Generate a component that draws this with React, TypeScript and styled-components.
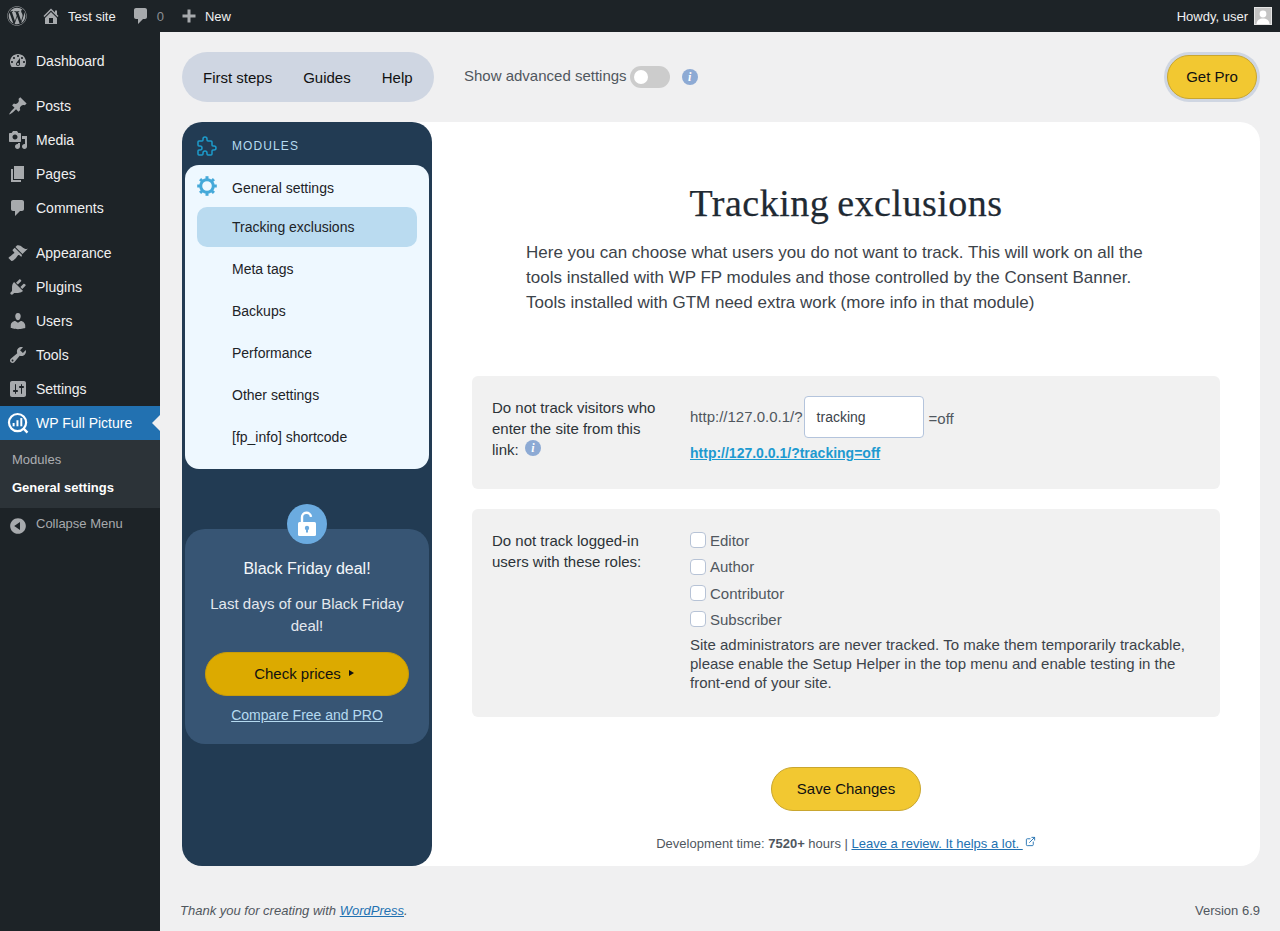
import React from "react";
import styled, { createGlobalStyle } from "styled-components";
import { FaWordpress } from "react-icons/fa";
import { TbPuzzle } from "react-icons/tb";
import { ExternalLink } from "lucide-react";

const Global = createGlobalStyle`
  html, body { margin: 0; padding: 0; background: #f0f0f1; }
  body { font-family: "Liberation Sans", Arial, sans-serif; font-size: 13px; color: #3c434a; }
  * { box-sizing: border-box; }
`;

const Page = styled.div`height: 931px; display: flex; flex-direction: column; overflow: hidden;`;
const AdminBar = styled.header`
  height: 32px; flex: none; background: #1d2327; color: #f0f0f1; display: flex; align-items: center;
  font-size: 13px;
`;
const BarLogo = styled.span`width: 34px; margin-left: 7px; display: flex; color: #a7aaad;`;
const BarItem = styled.span<{ $gap: number; $ml: number }>`
  display: flex; align-items: center; gap: ${p => p.$gap}px; margin-left: ${p => p.$ml}px;
  svg { fill: #a7aaad; flex: none; }
`;
const BarCount = styled.span`color: #8c8f94; margin-left: 2px;`;
const BarRight = styled.div`margin-left: auto; display: flex; align-items: center; gap: 6px; padding-right: 8px;`;
const Avatar = styled.span`width: 18px; height: 18px; background: #c4c4c4; border: 1px solid #e5e5e5; display: flex; overflow: hidden;`;

const Body = styled.div`flex: 1; display: flex; min-height: 0;`;
const SideMenu = styled.nav`width: 160px; flex: none; background: #1d2327; padding-top: 12px; font-size: 14px;`;
const MenuItem = styled.div<{ $active?: boolean; $sep?: boolean }>`
  height: 34px; display: flex; align-items: center; position: relative; margin-top: ${p => p.$sep ? 11 : 0}px;
  color: ${p => p.$active ? "#fff" : "#f0f0f1"}; background: ${p => p.$active ? "#2271b1" : "transparent"};
  svg.menu { width: 20px; height: 20px; fill: #a7aaad; margin-left: 8px; margin-right: 8px; flex: none; }
  svg.brand { width: 22px; height: 22px; margin-left: 7px; margin-right: 7px; flex: none; }
`;
const ActiveArrow = styled.span`
  position: absolute; right: 0; top: 9px; border: 8px solid transparent; border-right-color: #f0f0f1; border-left: 0;
`;
const SubMenu = styled.div`background: #2c3338; height: 68px; padding: 5px 0 0 12px; font-size: 13px;`;
const SubItem = styled.div<{ $current?: boolean }>`
  height: 28px; display: flex; align-items: center; color: ${p => p.$current ? "#fff" : "#c3c4c7"}; font-weight: ${p => p.$current ? 700 : 400};
  opacity: ${p => p.$current ? 1 : 0.85};
`;
const Collapse = styled.div`
  height: 34px; display: flex; align-items: center; color: #a7aaad; font-size: 13px;
  svg { width: 20px; height: 20px; fill: #a7aaad; margin-left: 8px; margin-right: 8px; margin-top: 1px; }
  span { margin-top: -3px; }
`;

const Content = styled.main`flex: 1; padding: 20px 20px 0 20px; display: flex; flex-direction: column; min-width: 0;`;
const Toolbar = styled.div`height: 50px; margin-left: 2px; display: flex; align-items: center;`;
const NavPill = styled.div`
  width: 252px; height: 50px; border-radius: 25px; background: #cfd6e2; display: flex; align-items: center; padding-left: 21px; gap: 31px;
  font-size: 15px; color: #111;
`;
const AdvLabel = styled.span`margin-left: 30px; font-size: 15px; color: #50575e; margin-top: -3px;`;
const Toggle = styled.span`
  width: 40px; height: 22px; border-radius: 11px; background: #ccc; margin-left: 3px; padding: 4px; display: flex;
  &::before { content: ""; width: 14px; height: 14px; border-radius: 50%; background: #fff; }
`;
const Info = styled.span<{ $ml: number; $lift: number }>`
  display: inline-flex; align-items: center; justify-content: center; width: 16px; height: 16px; border-radius: 50%; background: #8daad4; color: #fff;
  font: italic 700 12px/16px "Liberation Serif", serif; margin-left: ${p => p.$ml}px; vertical-align: ${p => p.$lift}px;
`;
const ProRing = styled.span`margin-left: auto; padding: 3px; border-radius: 25px; background: #cfd6e2; display: flex;`;
const YellowBtn = styled.span<{ $w: number }>`
  width: ${p => p.$w}px; height: 44px; border-radius: 22px; background: #f2c831; border: 1px solid #c9a62f; color: #111; font-size: 15px;
  display: flex; align-items: center; justify-content: center; padding-bottom: 1px;
`;

const Card = styled.section`
  margin: 20px 0 0 2px; height: 744px; flex: none; background: #fff; border-radius: 20px; display: flex;
`;
const Panel = styled.aside`width: 250px; flex: none; background: #223b53; border-radius: 20px; padding: 0 3px; display: flex; flex-direction: column;`;
const PanelHead = styled.div`
  height: 43px; display: flex; align-items: center; padding: 5px 0 0 12px; color: #b5daf0; font-size: 12px; letter-spacing: 1.1px;
  svg { width: 24px; height: 24px; color: #1d9ccc; margin: 0 13px 0 -2px; flex: none; }
`;
const Modules = styled.div`background: #eef8ff; border-radius: 14px; height: 304px; padding: 11px 12px 12px; font-size: 14px; color: #1d2327;`;
const ModHead = styled.div`height: 31px; display: flex; align-items: flex-start; svg { width: 20px; height: 20px; margin-right: 15px; flex: none; } span { margin-top: 4px; }`;
const ModList = styled.div`display: flex; flex-direction: column; gap: 2px;`;
const ModItem = styled.div<{ $on?: boolean }>`
  height: 40px; border-radius: 10px; padding-left: 35px; display: flex; align-items: center; background: ${p => p.$on ? "#badbf0" : "transparent"};
`;
const Promo = styled.div`
  margin-top: 60px; height: 215px; background: #375574; border-radius: 20px; position: relative; padding: 30px 20px 0; text-align: center; color: #eef2f7;
`;
const PromoIcon = styled.span`
  position: absolute; left: 102px; top: -25px; width: 40px; height: 40px; border-radius: 50%; background: #6babe0; display: flex; align-items: center; justify-content: center;
`;
const PromoTitle = styled.div`font-size: 16px; line-height: 20px; color: #f4f7fa;`;
const PromoText = styled.div`font-size: 15px; line-height: 22px; margin-top: 14px; color: #e3e8ee;`;
const PromoBtn = styled.div`
  height: 44px; margin-top: 15px; border-radius: 22px; background: #dcaa00; border: 1px solid #c99c08; color: #111; font-size: 15px;
  display: flex; align-items: center; justify-content: center; gap: 8px; padding: 0 6px 2px 0;
  &::after { content: ""; border: 3.5px solid transparent; border-left: 5px solid #111; border-right: 0; margin-top: -1px; }
`;
const PromoLink = styled.a`display: block; margin-top: 10px; font-size: 14px; line-height: 18px; color: #b5daf0; text-decoration: underline;`;

const Main = styled.div`flex: 1; padding: 0 40px; display: flex; flex-direction: column; min-width: 0;`;
const Title = styled.h1`
  margin: 59px 0 0; font: 400 38px/44px "Liberation Serif", serif; text-align: center; color: #1f2a33; letter-spacing: 0.5px; word-spacing: -2px;
  -webkit-text-stroke: 0.25px #1f2a33;
`;
const Lead = styled.p`margin: 15px 0 0 54px; width: 640px; font-size: 17px; line-height: 25px; color: #3c434a;`;
const Box = styled.div<{ $h: number; $mt: number }>`
  height: ${p => p.$h}px; margin-top: ${p => p.$mt}px; background: #f1f1f1; border-radius: 6px; padding: 20px; display: flex;
`;
const Label = styled.div`width: 198px; flex: none; font-size: 15px; line-height: 21px; color: #2c3338; padding: 1px 30px 0 0;`;
const Field = styled.div<{ $lift?: boolean }>`flex: 1; min-width: 0; font-size: 15px; color: #50575e; margin-top: ${p => p.$lift ? -2 : 0}px;`;
const UrlLine = styled.div`display: flex; align-items: center; height: 42px; gap: 1px;`;
const UrlBase = styled.span`margin-top: -2px;`;
const TextBox = styled.div`
  width: 120px; height: 42px; background: #fff; border: 1px solid #b4c4dc; border-radius: 4px; padding-left: 12px; display: flex; align-items: center; font-size: 14px; color: #3c434a;
`;
const OffText = styled.span`margin-left: 4px; margin-top: 2px;`;
const UrlLink = styled.a`display: block; margin-top: 6px; font-size: 14px; line-height: 18px; font-weight: 700; color: #1d9ad0; text-decoration: underline;`;
const CheckRow = styled.label<{ $h: number }>`display: flex; align-items: center; height: ${p => p.$h}px; gap: 4px; color: #50575e;`;
const CheckBox = styled.span`width: 16px; height: 16px; background: #fff; border: 1px solid #b7c3d6; border-radius: 4px; flex: none;`;
const Note = styled.p`margin: 3px 0 0; font-size: 15px; line-height: 19px; color: #3c434a;`;
const SaveWrap = styled.div`display: flex; justify-content: center; margin-top: 50px;`;
const Dev = styled.div`
  margin-top: 25px; text-align: center; font-size: 13px; line-height: 16px; color: #50575e;
  a { color: #2271b1; text-decoration: underline; }
  svg { width: 11px; height: 11px; margin-left: 2px; vertical-align: 1px; }
`;
const Footer = styled.footer`
  margin-top: 37px; display: flex; justify-content: space-between; font-size: 13px; line-height: 16px; color: #50575e;
  em a { color: #2271b1; text-decoration: underline; }
`;

const Dash = ({ d }: { d: string }) => <svg className="menu" viewBox="0 0 20 20"><path d={d} /></svg>;
const P = {
  dash: "M3.76 16h12.48c1.1-1.37 1.76-3.11 1.76-5 0-4.42-3.58-8-8-8s-8 3.58-8 8c0 1.89.66 3.63 1.76 5zM10 4c.55 0 1 .45 1 1s-.45 1-1 1-1-.45-1-1 .45-1 1-1zM6 6c.55 0 1 .45 1 1s-.45 1-1 1-1-.45-1-1 .45-1 1-1zm8 0c.55 0 1 .45 1 1s-.45 1-1 1-1-.45-1-1 .45-1 1-1zm-5.37 5.55L12 7v6c0 1.1-.9 2-2 2s-2-.9-2-2c0-.57.24-1.08.63-1.45zM4 10c.55 0 1 .45 1 1s-.45 1-1 1-1-.45-1-1 .45-1 1-1zm12 0c.55 0 1 .45 1 1s-.45 1-1 1-1-.45-1-1 .45-1 1-1zm-5 3c0-.55-.45-1-1-1s-1 .45-1 1 .45 1 1 1 1-.45 1-1z",
  pin: "M10.44 3.02l1.82-1.82 6.36 6.35-1.83 1.82c-1.05-.68-2.48-.57-3.41.36l-.75.75c-.92.93-1.04 2.35-.35 3.41l-1.83 1.82-2.41-2.41-2.8 2.79c-.42.42-3.38 2.71-3.8 2.29s1.86-3.39 2.28-3.81l2.79-2.79L4.1 9.36l1.83-1.82c1.05.69 2.48.57 3.4-.36l.75-.75c.93-.92 1.05-2.35.36-3.41z",
  media: "M13 11V4c0-.55-.45-1-1-1h-1.67L9 1H5L3.67 3H2c-.55 0-1 .45-1 1v7c0 .55.45 1 1 1h10c.55 0 1-.45 1-1zM7 4.5c1.38 0 2.5 1.12 2.5 2.5S8.38 9.5 7 9.5 4.5 8.38 4.5 7 5.62 4.5 7 4.5zM14 6h5v10.5c0 1.38-1.12 2.5-2.5 2.5S14 17.88 14 16.5s1.12-2.5 2.5-2.5c.17 0 .34.02.5.05V9h-3V6zm-4 8.05V13h2v3.5c0 1.38-1.12 2.5-2.5 2.5S7 17.88 7 16.5 8.12 14 9.5 14c.17 0 .34.02.5.05z",
  page: "M6 15V2h10v13H6zm-1 1h8v2H3V5h2v11z",
  comment: "M5 2h9c1.1 0 2 .9 2 2v7c0 1.1-.9 2-2 2h-2l-5 5v-5H5c-1.1 0-2-.9-2-2V4c0-1.1.9-2 2-2z",
  appearance: "M14.48 11.06L7.41 3.99l1.5-1.5c.5-.56 2.3-.47 3.51.32 1.21.8 1.43 1.28 2.91 2.1 1.18.64 2.45 1.26 4.45.85zm-.71.71L6.7 4.7 4.93 6.47c-.39.39-.39 1.02 0 1.41l1.06 1.06c.39.39.39 1.03 0 1.42-.6.6-1.43 1.11-2.21 1.69-.35.26-.7.53-1.01.84C1.43 13.23.4 14.98.4 14.98s1.94 1.94 2.85 2.85c.9.91 2.9-.99 4.26-2.35.31-.31.58-.66.84-1.01.58-.78 1.09-1.61 1.69-2.21.39-.39 1.03-.39 1.42 0l1.06 1.06c.39.39 1.02.39 1.41 0z",
  plugin: "M13.11 4.36L9.87 7.6 8 5.73l3.24-3.24c.35-.34 1.05-.2 1.56.32.52.51.66 1.21.31 1.55zm-8 1.77l.91-1.12 9.01 9.01-1.19.84c-.71.71-2.63 1.16-3.82 1.16H6.14L4.9 17.26c-.59.59-1.54.59-2.12 0-.59-.58-.59-1.53 0-2.12l1.24-1.24v-3.88c0-1.13.4-3.19 1.09-3.89zm7.26 3.97l3.24-3.24c.34-.35 1.04-.21 1.55.31.52.51.66 1.21.31 1.55l-3.24 3.25z",
  users: "M10 9.25c-2.27 0-2.73-3.44-2.73-3.44C7 4.02 7.82 2 9.97 2c2.16 0 2.98 2.02 2.71 3.81 0 0-.41 3.44-2.68 3.44zm0 2.57L12.72 10c2.39 0 4.52 2.33 4.52 4.53v2.49s-3.65 1.13-7.24 1.13c-3.65 0-7.24-1.13-7.24-1.13v-2.49c0-2.25 1.94-4.48 4.47-4.48z",
  tools: "M16.68 9.77c-1.34 1.34-3.3 1.67-4.95.99l-5.41 6.52c-.99.99-2.59.99-3.58 0s-.99-2.59 0-3.57l6.52-5.42c-.68-1.65-.35-3.61.99-4.95 1.28-1.28 3.12-1.62 4.72-1.06l-2.89 2.89 2.82 2.82 2.86-2.87c.53 1.58.18 3.39-1.08 4.65zM3.81 16.21c.4.39 1.04.39 1.43 0 .4-.4.4-1.04 0-1.43-.39-.4-1.03-.4-1.43 0-.39.39-.39 1.03 0 1.43z",
  settings: "M18 16V4c0-1.1-.9-2-2-2H4c-1.1 0-2 .9-2 2v12c0 1.1.9 2 2 2h12c1.1 0 2-.9 2-2zM8 11h1c.55 0 1 .45 1 1s-.45 1-1 1H8v1.5c0 .28-.22.5-.5.5s-.5-.22-.5-.5V13H6c-.55 0-1-.45-1-1s.45-1 1-1h1V5.5c0-.28.22-.5.5-.5s.5.22.5.5V11zm5-2h-1c-.55 0-1-.45-1-1s.45-1 1-1h1V5.5c0-.28.22-.5.5-.5s.5.22.5.5V7h1c.55 0 1 .45 1 1s-.45 1-1 1h-1v5.5c0 .28-.22.5-.5.5s-.5-.22-.5-.5V9z",
  collapse: "M10 2.16c4.33 0 7.84 3.51 7.84 7.84s-3.51 7.84-7.84 7.84S2.16 14.33 2.16 10 5.71 2.16 10 2.16zm2 11.72V6.12L6.18 9.97z",
  home: "M16 8.5l1.53 1.53-1.06 1.06L10 4.62l-6.47 6.47-1.06-1.06L10 2.5l4 4v-2h2v4zm-6-2.46l6 5.99V18H4v-5.97zM12 17v-5H8v5h4z",
  plus: "M17 7v3h-5v5H9v-5H4V7h5V2h3v5h5z",
};

const Gear = () => (
  <svg viewBox="0 0 20 20" fill="none" stroke="#45a9d9">
    <circle cx="10" cy="10" r="6.3" strokeWidth="3" />
    <g strokeWidth="3">
      {[0, 45, 90, 135, 180, 225, 270, 315].map(a => (
        <line key={a} x1="10" y1="0.2" x2="10" y2="3" transform={`rotate(${a} 10 10)`} />
      ))}
    </g>
  </svg>
);

const WpfpIcon = () => (
  <svg className="brand" viewBox="0 0 20 20" fill="none" stroke="#fff">
    <circle cx="9.6" cy="9.6" r="7.8" strokeWidth="2" />
    <line x1="15" y1="15" x2="18.6" y2="18.8" strokeWidth="2.2" />
    <line x1="6" y1="13" x2="6" y2="10" strokeWidth="1.8" />
    <line x1="9.5" y1="13" x2="9.5" y2="7.5" strokeWidth="1.8" />
    <line x1="13" y1="13" x2="13" y2="5.5" strokeWidth="1.8" />
  </svg>
);

const Unlock = () => (
  <svg viewBox="0 0 20 26" width="20" height="26">
    <path d="M5 13V6.500a4.500 4.500 0 0 1 9-.6" fill="none" stroke="#fff" strokeWidth="2.400" />
    <rect x="1" y="11" width="18" height="14" rx="1.500" fill="#fff" />
    <circle cx="10" cy="17" r="2.200" fill="#6babe0" />
    <rect x="9" y="17" width="2" height="4.500" fill="#6babe0" />
  </svg>
);

const menu1 = [["pin", "Posts"], ["media", "Media"], ["page", "Pages"], ["comment", "Comments"]] as const;
const menu2 = [["appearance", "Appearance"], ["plugin", "Plugins"], ["users", "Users"], ["tools", "Tools"], ["settings", "Settings"]] as const;
const modules = ["Tracking exclusions", "Meta tags", "Backups", "Performance", "Other settings", "[fp_info] shortcode"];
const roles: [string, number][] = [["Editor", 26], ["Author", 27], ["Contributor", 26], ["Subscriber", 26]];

export default function App() {
  return (
    <Page>
      <Global />
      <AdminBar>
        <BarLogo><FaWordpress size={20} /></BarLogo>
        <BarItem $gap={7} $ml={0}><svg viewBox="0 0 20 20" width="20" height="20"><path d={P.home} /></svg>Test site</BarItem>
        <BarItem $gap={4} $ml={15}><svg viewBox="0 0 20 20" width="20" height="20"><path d={P.comment} /></svg><BarCount>0</BarCount></BarItem>
        <BarItem $gap={6} $ml={15}><svg viewBox="0.5 -1.5 20 20" width="20" height="20"><path d={P.plus} /></svg>New</BarItem>
        <BarRight>
          Howdy, user
          <Avatar><svg viewBox="0 0 16 16" width="16" height="16"><circle cx="8" cy="6" r="3.400" fill="#fff" /><path d="M1.500 16c.4-4 3-5.500 6.500-5.500s6.100 1.500 6.500 5.500z" fill="#fff" /></svg></Avatar>
        </BarRight>
      </AdminBar>
      <Body>
        <SideMenu>
          <MenuItem><Dash d={P.dash} />Dashboard</MenuItem>
          {menu1.map(([k, t], i) => <MenuItem key={t} $sep={i === 0}><Dash d={P[k]} />{t}</MenuItem>)}
          {menu2.map(([k, t], i) => <MenuItem key={t} $sep={i === 0}><Dash d={P[k]} />{t}</MenuItem>)}
          <MenuItem $active><WpfpIcon />WP Full Picture<ActiveArrow /></MenuItem>
          <SubMenu>
            <SubItem>Modules</SubItem>
            <SubItem $current>General settings</SubItem>
          </SubMenu>
          <Collapse><svg viewBox="0 0 20 20"><path d={P.collapse} /></svg><span>Collapse Menu</span></Collapse>
        </SideMenu>
        <Content>
          <Toolbar>
            <NavPill><span>First steps</span><span>Guides</span><span>Help</span></NavPill>
            <AdvLabel>Show advanced settings</AdvLabel>
            <Toggle />
            <Info $ml={12} $lift={0}>i</Info>
            <ProRing><YellowBtn $w={90}>Get Pro</YellowBtn></ProRing>
          </Toolbar>
          <Card>
            <Panel>
              <PanelHead><TbPuzzle strokeWidth={1.5} />MODULES</PanelHead>
              <Modules>
                <ModHead><Gear /><span>General settings</span></ModHead>
                <ModList>
                  {modules.map((m, i) => <ModItem key={m} $on={i === 0}>{m}</ModItem>)}
                </ModList>
              </Modules>
              <Promo>
                <PromoIcon><Unlock /></PromoIcon>
                <PromoTitle>Black Friday deal!</PromoTitle>
                <PromoText>Last days of our Black Friday deal!</PromoText>
                <PromoBtn>Check prices</PromoBtn>
                <PromoLink>Compare Free and PRO</PromoLink>
              </Promo>
            </Panel>
            <Main>
              <Title>Tracking exclusions</Title>
              <Lead>Here you can choose what users you do not want to track. This will work on all the tools installed with WP FP modules and those controlled by the Consent Banner. Tools installed with GTM need extra work (more info in that module)</Lead>
              <Box $h={113} $mt={61}>
                <Label>Do not track visitors who enter the site from this link: <Info $ml={2} $lift={3}>i</Info></Label>
                <Field>
                  <UrlLine><UrlBase>http://127.0.0.1/?</UrlBase><TextBox>tracking</TextBox><OffText>=off</OffText></UrlLine>
                  <UrlLink>http://127.0.0.1/?tracking=off</UrlLink>
                </Field>
              </Box>
              <Box $h={208} $mt={20}>
                <Label>Do not track logged-in users with these roles:</Label>
                <Field $lift>
                  {roles.map(([r, h]) => <CheckRow key={r} $h={h}><CheckBox />{r}</CheckRow>)}
                  <Note>Site administrators are never tracked. To make them temporarily trackable, please enable the Setup Helper in the top menu and enable testing in the front-end of your site.</Note>
                </Field>
              </Box>
              <SaveWrap><YellowBtn $w={150}>Save Changes</YellowBtn></SaveWrap>
              <Dev>Development time: <b>7520+</b> hours | <a>Leave a review. It helps a lot. <ExternalLink /></a></Dev>
            </Main>
          </Card>
          <Footer>
            <em>Thank you for creating with <a>WordPress</a>.</em>
            <span>Version 6.9</span>
          </Footer>
        </Content>
      </Body>
    </Page>
  );
}
